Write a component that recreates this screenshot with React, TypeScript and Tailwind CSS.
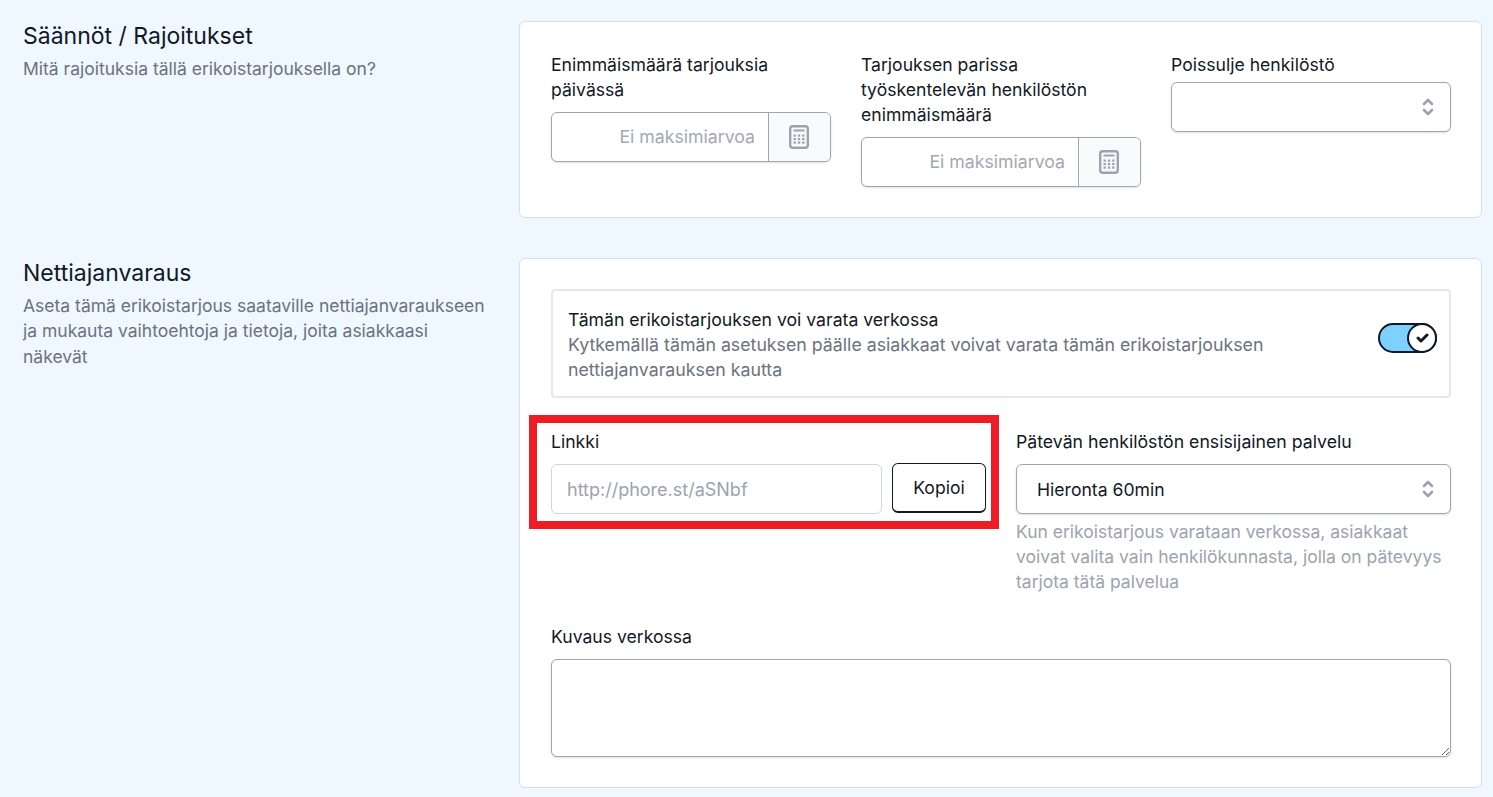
import React from "react";

function CalcIcon() {
  return (
    <svg width="20" height="24" viewBox="0 0 20 24" fill="none">
      <rect x="1.2" y="1.2" width="17.6" height="21.6" rx="2.5" stroke="#9ca3af" strokeWidth="2.4" />
      <rect x="4.5" y="4.5" width="11" height="2" fill="#9ca3af" />
      {[9.5, 13, 16.5].map((y) =>
        [4.5, 8.8, 13.1].map((x) => <rect key={`${x}-${y}`} x={x} y={y} width="2.4" height="2.2" fill="#9ca3af" />)
      )}
    </svg>
  );
}

function Chevrons() {
  return (
    <svg width="12" height="20" viewBox="0 0 12 20" fill="none" stroke="#9ca3af" strokeWidth="2.6" strokeLinecap="round" strokeLinejoin="round">
      <path d="M2 7 L6 3 L10 7" />
      <path d="M2 13 L6 17 L10 13" />
    </svg>
  );
}

function NumberField() {
  return (
    <div className="flex h-[50px] rounded-md border border-[#a0a6b8] bg-white shadow-sm overflow-hidden">
      <div className="flex-1 flex items-center justify-end pr-[13px] text-[17.7px] text-[#a3a8b5]">Ei maksimiarvoa</div>
      <div className="w-[62px] flex items-center justify-center border-l border-[#a0a6b8] bg-[#f9fafb] pr-[2px]">
        <CalcIcon />
      </div>
    </div>
  );
}

function Select({ value }: { value?: string }) {
  return (
    <div className="flex h-[50px] items-center justify-between rounded-md border border-[#a0a6b8] bg-white pl-[20px] pr-[16px] shadow-sm text-[#111827]">
      <span className="pt-[2px]">{value}</span>
      <Chevrons />
    </div>
  );
}

export default function App() {
  return (
    <div className="min-h-[797px] bg-[#eff7ff] pl-[23px] pr-[11px] pt-[21px] overflow-hidden text-[17.6px] leading-[25.5px] text-[#111827]" style={{ fontFamily: "Inter, sans-serif" }}>
      <div className="flex">
        <div className="w-[496px] shrink-0 pr-[24px]">
          <h2 className="text-[23px] leading-[28px] mt-[1px] mb-[6px] text-[#111827]">Säännöt / Rajoitukset</h2>
          <p className="text-[17.5px] text-[#6b7280]">Mitä rajoituksia tällä erikoistarjouksella on?</p>
        </div>
        <div className="flex-1 h-[197px] rounded-md border border-[#cfe0f5] bg-white pl-[31px] pr-[30px] pt-[29.6px]">
          <div className="grid grid-cols-3 gap-[30px] items-start">
            <div>
              <label className="block mb-[9.4px]">Enimmäismäärä tarjouksia päivässä</label>
              <NumberField />
            </div>
            <div>
              <label className="block mb-[9.8px] leading-[25.2px]">Tarjouksen parissa työskentelevän henkilöstön enimmäismäärä</label>
              <NumberField />
            </div>
            <div>
              <label className="block mb-[4.9px]">Poissulje henkilöstö</label>
              <Select />
            </div>
          </div>
        </div>
      </div>

      <div className="flex mt-[40px]">
        <div className="w-[496px] shrink-0 pr-[24px]">
          <h2 className="text-[23px] leading-[28px] mb-[5.7px] mt-[1px] text-[#111827]">Nettiajanvaraus</h2>
          <p className="text-[17.5px] text-[#6b7280]">Aseta tämä erikoistarjous saataville nettiajanvaraukseen ja mukauta vaihtoehtoja ja tietoja, joita asiakkaasi näkevät</p>
        </div>
        <div className="flex-1 h-[530px] rounded-md border border-[#cfe0f5] bg-white pl-[31px] pr-[30px] pt-[30px]">
          <div className="flex items-start justify-between h-[109px] rounded-[4px] border-2 border-[#e5e7eb] pl-[15px] pr-[12px]">
            <div className="w-[740px] mt-[15.6px]">
              <div className="text-[17.65px] text-[#111827]">Tämän erikoistarjouksen voi varata verkossa</div>
              <div className="text-[17.75px] leading-[25px] text-[#6b7280]">Kytkemällä tämän asetuksen päälle asiakkaat voivat varata tämän erikoistarjouksen nettiajanvarauksen kautta</div>
            </div>
            <div className="relative mt-[32px] h-[30px] w-[59px] rounded-full border-2 border-[#111827] bg-[#7dd0ff]">
              <div className="absolute right-[-2px] top-[-2px] flex h-[30px] w-[30px] items-center justify-center rounded-full border-2 border-[#111827] bg-white">
                <svg width="13" height="10" viewBox="0 0 13 10" fill="none" stroke="#111827" strokeWidth="3" strokeLinecap="round" strokeLinejoin="round">
                  <path d="M2 5 L5 8 L11 2" />
                </svg>
              </div>
            </div>
          </div>

          <div className="grid grid-cols-2 gap-[30px] mt-[30.5px]">
            <div className="relative">
              <label className="block mb-[10px]">Linkki</label>
              <div className="flex gap-[10px]">
                <div className="flex-1 flex h-[50px] items-center rounded-md border border-[#d1d5db] bg-white pl-[15px] pr-[15px] pt-[1px] text-[18px] text-[#9ca3af]">http://phore.st/aSNbf</div>
                <button className="h-[50px] w-[94px] -mt-[1px] rounded-md border border-[#111827] border-b-2 bg-white text-[#111827]">Kopioi</button>
              </div>
              <div className="absolute left-[-22px] top-[-13.5px] h-[114px] w-[470px] border-[8px] border-[#ee1c25]" />
            </div>
            <div>
              <label className="block mb-[10px] text-[17.7px]">Pätevän henkilöstön ensisijainen palvelu</label>
              <Select value="Hieronta 60min" />
              <p className="mt-[4.6px] text-[17.5px] leading-[25px] text-[#9ca3af]">Kun erikoistarjous varataan verkossa, asiakkaat voivat valita vain henkilökunnasta, jolla on pätevyys tarjota tätä palvelua</p>
            </div>
          </div>

          <label className="block mt-[30.4px] mb-[9.5px]">Kuvaus verkossa</label>
          <textarea readOnly className="block h-[98px] w-full rounded-md border border-[#a0a6b8] bg-white shadow-sm outline-none" />
        </div>
      </div>
    </div>
  );
}
